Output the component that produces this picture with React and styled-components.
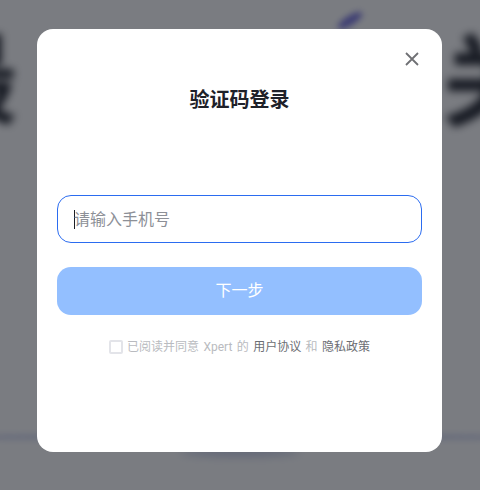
import React from "react";
import styled, { createGlobalStyle } from "styled-components";

const Global = createGlobalStyle`
  html, body { margin: 0; padding: 0; width: 480px; height: 490px; overflow: hidden; }
  body { font-family: Roboto, "Noto Sans CJK SC", sans-serif; }
  * { box-sizing: border-box; }
`;

const Page = styled.div`
  position: relative;
  width: 480px;
  height: 490px;
  overflow: hidden;
  background: #fff;
  padding-top: 29px;
  display: flex;
  justify-content: center;
  align-items: flex-start;
`;

const BackdropGlyph = styled.span`
  position: absolute;
  left: ${(p) => p.$left}px;
  top: ${(p) => p.$top}px;
  font-size: 100px;
  line-height: 1;
  font-weight: 700;
  color: #23262e;
  filter: blur(4.5px);
`;

const BackdropStreak = styled.div`
  position: absolute;
  left: ${(p) => p.$left}px;
  top: ${(p) => p.$top}px;
  width: ${(p) => p.$w}px;
  height: ${(p) => p.$h}px;
  border-radius: 50%;
  background: ${(p) => p.$color};
  opacity: ${(p) => p.$opacity};
  transform: rotate(${(p) => p.$rotate || 0}deg);
  filter: blur(${(p) => p.$blur}px);
`;

const Scrim = styled.div`
  position: absolute;
  inset: 0;
  background: rgba(12, 17, 26, 0.55);
`;

const Modal = styled.section`
  position: relative;
  width: 405px;
  height: 423px;
  margin-left: -1px;
  background: #fff;
  border-radius: 16px;
  padding: 58px 20px 0;
  display: flex;
  flex-direction: column;
`;

const Close = styled.button`
  position: absolute;
  top: 20px;
  right: 20px;
  width: 20px;
  height: 20px;
  padding: 0;
  border: 0;
  background: none;
  color: #6f7074;
  display: flex;
  align-items: center;
  justify-content: center;
`;

const Title = styled.h1`
  margin: 0;
  height: 26px;
  font-size: 20px;
  line-height: 26px;
  font-weight: 700;
  color: #1e2129;
  text-align: center;
`;

const Field = styled.div`
  margin-top: 82px;
  height: 48px;
  border: 1px solid #2b6cf0;
  border-radius: 14px;
  padding: 0 0 2px 16px;
  display: flex;
  align-items: center;
  font-size: 16px;
  color: #8d9097;
`;

const Caret = styled.span`
  width: 1px;
  height: 19px;
  margin: 2px -1px 0 0;
  background: #1c1f26;
`;

const Submit = styled.button`
  margin-top: 24px;
  height: 48px;
  padding: 0 0 4px;
  border: 0;
  border-radius: 14px;
  background: #93bfff;
  color: #fff;
  font: inherit;
  font-size: 16px;
`;

const Agreement = styled.div`
  margin-top: 24px;
  display: flex;
  align-items: center;
  justify-content: center;
  gap: 4px;
  height: 16px;
  font-size: 12px;
  line-height: 16px;
  color: #b9bbc0;
  word-spacing: 1.4px;
  white-space: pre;
`;

const Check = styled.span`
  width: 14px;
  height: 14px;
  border: 2px solid #e3e4e9;
  border-radius: 2px;
`;

const Link = styled.span`
  color: #6c6e73;
`;

export default function App() {
  return (
    <Page>
      <Global />
      <BackdropGlyph $left={-82} $top={32}>最</BackdropGlyph>
      <BackdropGlyph $left={442} $top={34}>关</BackdropGlyph>
      <BackdropStreak $left={336} $top={16} $w={28} $h={9} $color="#3a35d0" $opacity={0.7} $rotate={-32} $blur={3} />
      <BackdropStreak $left={-60} $top={434} $w={600} $h={6} $color="#4a60c8" $opacity={0.3} $blur={3} />
      <BackdropStreak $left={180} $top={448} $w={120} $h={8} $color="#4a62b0" $opacity={0.35} $blur={5} />
      <Scrim />
      <Modal>
        <Close aria-label="关闭">
          <svg width="16" height="16" viewBox="0 0 16 16" fill="none" stroke="currentColor" strokeWidth="1.8">
            <path d="M2 2 L14 14 M14 2 L2 14" />
          </svg>
        </Close>
        <Title>验证码登录</Title>
        <Field><Caret />请输入手机号</Field>
        <Submit>下一步</Submit>
        <Agreement>
          <Check />
          <span>已阅读并同意 Xpert 的 <Link>用户协议</Link> 和 <Link>隐私政策</Link></span>
        </Agreement>
      </Modal>
    </Page>
  );
}
